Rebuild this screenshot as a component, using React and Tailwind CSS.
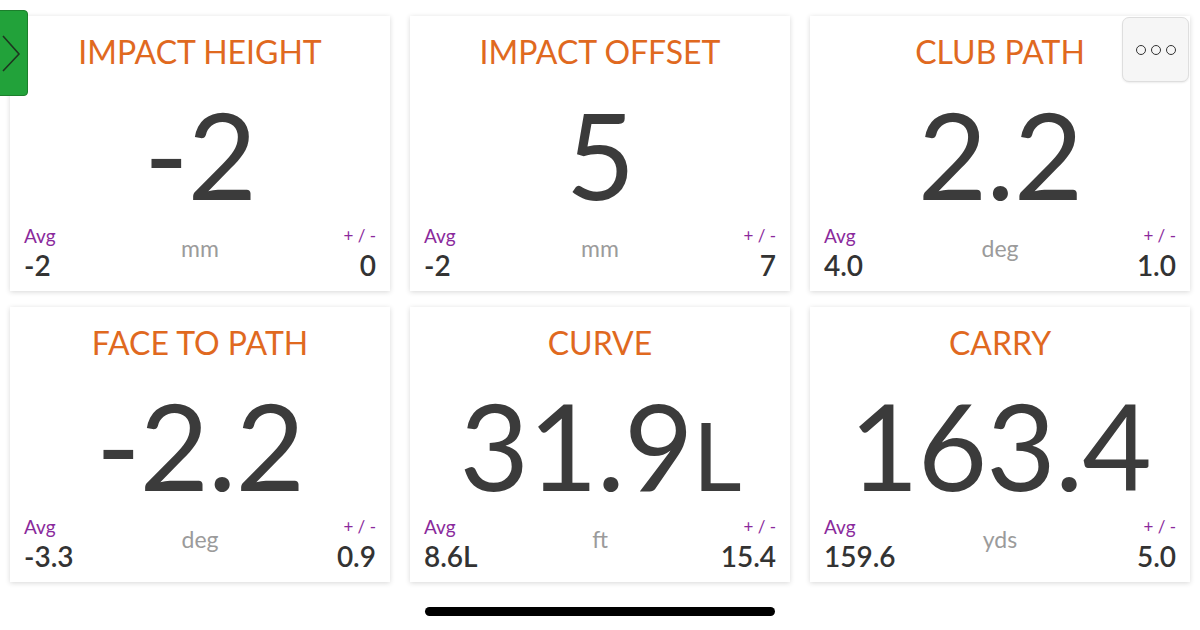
import React from "react";

const metrics = [
  { title: "IMPACT HEIGHT", value: "-2", unit: "mm", avg: "-2", spread: "0" },
  { title: "IMPACT OFFSET", value: "5", unit: "mm", avg: "-2", spread: "7" },
  { title: "CLUB PATH", value: "2.2", unit: "deg", avg: "4.0", spread: "1.0" },
  { title: "FACE TO PATH", value: "-2.2", unit: "deg", avg: "-3.3", spread: "0.9" },
  { title: "CURVE", value: "31.9", suffix: "L", unit: "ft", avg: "8.6L", spread: "15.4" },
  { title: "CARRY", value: "163.4", unit: "yds", avg: "159.6", spread: "5.0" },
];

function MetricCard({ m }) {
  return (
    <div className="flex h-[275px] flex-col bg-white px-[14px] pb-[11px] pt-[14px] shadow-[0_1px_5px_rgba(0,0,0,0.16)]">
      <div className="h-[44px] text-center text-[32px] leading-[44px] text-[#e0691f]">
        {m.title}
      </div>
      <div className="mt-[20px] flex h-[120px] items-baseline justify-center text-[120px] leading-[120px] tracking-[-1px] text-[#3b3b3b]">
        <span>{m.value}</span>
        {m.suffix && <span className="text-[95px]">{m.suffix}</span>}
      </div>
      <div className="mt-auto flex items-end justify-between">
        <div className="flex w-[120px] flex-col">
          <span className="text-[19px] leading-[22px] text-[#8a2a9c]">Avg</span>
          <span className="mt-[3px] text-[28px] font-semibold leading-[30px] text-[#333]">{m.avg}</span>
        </div>
        <div className="mb-[19px] text-[23px] leading-[26px] text-[#9b9b9b]">{m.unit}</div>
        <div className="flex w-[120px] flex-col items-end">
          <span className="text-[17px] leading-[22px] text-[#8a2a9c]">+ / -</span>
          <span className="mt-[3px] text-[28px] font-semibold leading-[30px] text-[#333]">{m.spread}</span>
        </div>
      </div>
    </div>
  );
}

export default function App() {
  return (
    <div
      className="relative h-[630px] w-[1200px] overflow-hidden bg-white"
      style={{ fontFamily: "Lato, 'Open Sans', sans-serif" }}
    >
      <div className="grid grid-cols-3 gap-x-[20px] gap-y-[16px] px-[10px] pt-[16px]">
        {metrics.map((m) => (
          <MetricCard key={m.title} m={m} />
        ))}
      </div>

      <div className="mx-auto mt-[25px] h-[9px] w-[350px] rounded-full bg-black" />

      {/* side drawer toggle */}
      <div className="absolute left-[-6px] top-[10px] flex h-[86px] w-[34px] items-center justify-end rounded-[4px] border border-[#1c7f2c] bg-[#22a23a] pr-[6px]">
        <svg width="20" height="40" viewBox="0 0 20 40" fill="none">
          <path d="M2 3 L18 21 L2 38" stroke="#1e3520" strokeWidth="1.6" />
        </svg>
      </div>

      {/* overflow menu button */}
      <div className="absolute left-[1122px] top-[17px] flex h-[65px] w-[67px] items-center justify-center gap-[5px] rounded-[7px] border border-[#dedede] bg-[#f6f6f6] shadow-[0_1px_2px_rgba(0,0,0,0.08)]">
        <span className="h-[10px] w-[10px] rounded-full border-[1.8px] border-[#333]" />
        <span className="h-[10px] w-[10px] rounded-full border-[1.8px] border-[#333]" />
        <span className="h-[10px] w-[10px] rounded-full border-[1.8px] border-[#333]" />
      </div>
    </div>
  );
}
